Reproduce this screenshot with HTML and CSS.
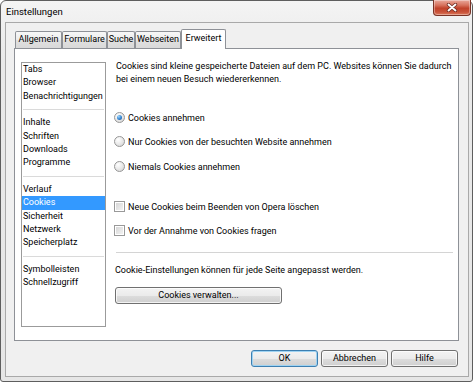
FILE: index.html
```html
<!DOCTYPE html>
<html lang="de">
<head>
<meta charset="utf-8">
<title>Einstellungen</title>
<link rel="stylesheet" href="styles.css">
</head>
<body>
<div class="window">
  <div class="titlebar">
    <span class="title">Einstellungen</span>
    <div class="close">
      <svg width="12" height="9" viewBox="0 0 12 9"><path d="M2.5 1.5 L9.5 7.5 M9.5 1.5 L2.5 7.5" stroke="#6b2a20" stroke-width="3.4" stroke-linecap="round"/><path d="M2.5 1.5 L9.5 7.5 M9.5 1.5 L2.5 7.5" stroke="#fff" stroke-width="1.9" stroke-linecap="round"/></svg>
    </div>
  </div>
  <div class="client">
    <div class="tabs">
      <div class="tab w1">Allgemein</div>
      <div class="tab w2">Formulare</div>
      <div class="tab w3">Suche</div>
      <div class="tab w4">Webseiten</div>
      <div class="tab w5 active">Erweitert</div>
    </div>
    <div class="panel">
      <ul class="nav">
        <li>Tabs</li>
        <li>Browser</li>
        <li>Benachrichtigungen</li>
        <li class="sep"></li>
        <li>Inhalte</li>
        <li>Schriften</li>
        <li>Downloads</li>
        <li>Programme</li>
        <li class="sep"></li>
        <li>Verlauf</li>
        <li class="selected">Cookies</li>
        <li>Sicherheit</li>
        <li>Netzwerk</li>
        <li>Speicherplatz</li>
        <li class="sep"></li>
        <li>Symbolleisten</li>
        <li>Schnellzugriff</li>
      </ul>
      <div class="content">
        <p class="desc">Cookies sind kleine gespeicherte Dateien auf dem PC. Websites können Sie dadurch bei einem neuen Besuch wiedererkennen.</p>
        <div class="opt r1"><span class="radio on"></span><span>Cookies annehmen</span></div>
        <div class="opt r2"><span class="radio"></span><span>Nur Cookies von der besuchten Website annehmen</span></div>
        <div class="opt r3"><span class="radio"></span><span>Niemals Cookies annehmen</span></div>
        <div class="opt c1"><span class="check"></span><span>Neue Cookies beim Beenden von Opera löschen</span></div>
        <div class="opt c2"><span class="check"></span><span>Vor der Annahme von Cookies fragen</span></div>
        <div class="rule"></div>
        <p class="note">Cookie-Einstellungen können für jede Seite angepasst werden.</p>
        <button class="btn manage">Cookies verwalten...</button>
      </div>
    </div>
    <div class="buttons">
      <button class="btn default">OK</button>
      <button class="btn">Abbrechen</button>
      <button class="btn">Hilfe</button>
    </div>
  </div>
</div>
</body>
</html>
```
FILE: styles.css
```css
* { box-sizing: border-box; }
body {
  margin: 0;
  font-family: Roboto, "Liberation Sans", sans-serif;
  font-size: 9px;
  color: #000;
  background: #fff;
}
.window {
  position: relative;
  width: 473px;
  height: 382px;
  border: 1px solid #5e5e5e;
  border-radius: 6px 6px 3px 3px;
  background: linear-gradient(#f4f4f4, #e9e9e9 60px, #e6e6e6);
  padding: 0 3px 4px 4px;
  display: flex;
  flex-direction: column;
}
.titlebar {
  height: 21px;
  display: flex;
  align-items: center;
  padding-left: 1px;
}
.title {
  font-size: 9.5px;
  line-height: 21px;
  color: #000;
}
.close {
  position: absolute;
  top: -1px;
  right: 1px;
  width: 38px;
  height: 16px;
  border: 1px solid #7a3326;
  border-top: none;
  border-radius: 0 0 4px 4px;
  background: linear-gradient(#e9a99b 0, #d7725d 35%, #c1422a 55%, #c9533a 80%, #dc7b5d 100%);
  display: flex;
  align-items: center;
  justify-content: center;
  box-shadow: inset 0 0 0 1px rgba(255,255,255,.35);
}
.close svg { display: block; margin-top: -1px; }
.client {
  flex: 1;
  border: 1px solid #a9a9a9;
  background: #f0f0f0;
  padding: 6px 0 0 8px;
  display: flex;
  flex-direction: column;
}
.tabs {
  height: 19px;
  margin-left: 1px;
  display: flex;
  align-items: flex-end;
}
.tab {
  height: 17px;
  border: 1px solid #8e9197;
  border-bottom: none;
  border-radius: 2px 2px 0 0;
  background: linear-gradient(#f7f7f7, #ebebeb 50%, #e0e0e0 51%, #d9d9d9);
  text-align: center;
  line-height: 15px;
  white-space: nowrap;
}
.w1 { width: 47px; }
.w2 { width: 45px; }
.w3 { width: 28px; }
.w4 { width: 46px; }
.w5 { width: 45px; }
.tab.active {
  position: relative;
  z-index: 1;
  height: 20px;
  margin-bottom: -1px;
  background: #fff;
  line-height: 16px;
}
.panel {
  width: 445px;
  height: 293px;
  border: 1px solid #8e9197;
  background: #fff;
  padding: 11px 0 0 6px;
  display: flex;
  align-items: flex-start;
}
.nav {
  list-style: none;
  margin: 2px 0 0 0;
  padding: 0;
  width: 85px;
  height: 265px;
  border: 1px solid #9b9b9b;
  flex: none;
}
.nav li {
  height: 13.33px;
  line-height: 13.33px;
  padding-left: 1px;
  white-space: nowrap;
  overflow: hidden;
}
.nav li.selected {
  background: #3399ff;
  color: #fff;
}
.nav li.sep {
  display: flex;
  align-items: center;
  padding: 0 1px;
}
.nav li.sep::after {
  content: "";
  flex: 1;
  height: 1px;
  background: #dadada;
}
.content {
  margin-left: 8px;
  width: 339px;
}
.desc {
  margin: 0;
  padding-left: 2px;
  line-height: 13px;
}
.opt {
  height: 13px;
  display: flex;
  align-items: center;
  gap: 3px;
  white-space: nowrap;
}
.r1 { margin-top: 25px; }
.r2 { margin-top: 11px; }
.r3 { margin-top: 12px; }
.c1 { margin-top: 27px; }
.c2 { margin-top: 11px; }
.radio {
  width: 11px;
  height: 11px;
  border-radius: 50%;
  border: 1px solid #969696;
  background: radial-gradient(circle at 35% 30%, #ffffff 0, #ececec 45%, #cfcfcf 100%);
  display: flex;
  align-items: center;
  justify-content: center;
  flex: none;
}
.radio.on::after {
  content: "";
  width: 5px;
  height: 5px;
  border-radius: 50%;
  background: radial-gradient(circle at 35% 30%, #9fd6fb 0, #3a8ad6 50%, #1b4f8f 100%);
}
.check {
  width: 11px;
  height: 11px;
  border: 1px solid #999;
  background: linear-gradient(135deg, #d3d3d3, #f6f6f6);
  box-shadow: inset 0 0 0 1px #fff;
  flex: none;
}
.rule {
  margin: 15px 0 0 2px;
  height: 1px;
  background: #d4d4d4;
}
.note {
  margin: 11px 0 0 0;
  padding-left: 1px;
  line-height: 13px;
}
.btn {
  height: 17px;
  width: 67px;
  padding: 0;
  border: 1px solid #707070;
  border-radius: 3px;
  background: linear-gradient(#f3f3f3 0, #ebebeb 50%, #dddddd 51%, #cfcfcf 100%);
  box-shadow: inset 0 0 0 1px rgba(255,255,255,.75);
  font: inherit;
  font-size: 9px;
  line-height: 15px;
  color: #000;
  text-align: center;
}
.btn.manage {
  display: block;
  margin: 10px 0 0 1px;
  width: 167px;
}
.btn.default {
  border-color: #3c7fb1;
  box-shadow: inset 0 0 0 1px #9fd3f2;
}
.buttons {
  margin-top: 9px;
  padding-right: 10px;
  display: flex;
  justify-content: flex-end;
  gap: 3px;
}
```
